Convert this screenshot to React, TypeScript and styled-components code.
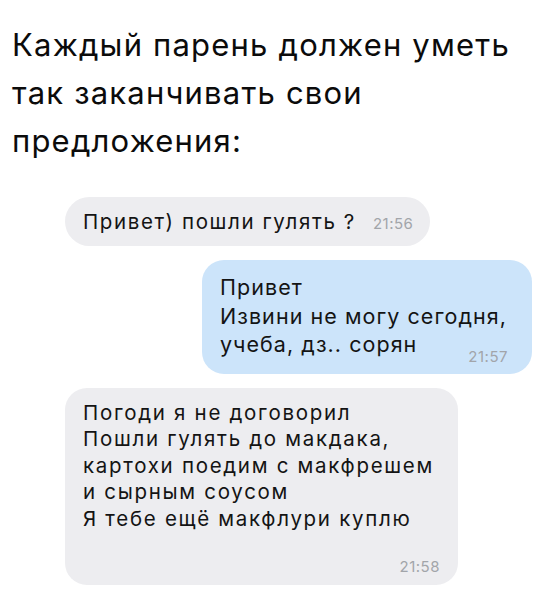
import React from "react";
import styled, { createGlobalStyle } from "styled-components";

const Global = createGlobalStyle`
  html, body {
    margin: 0;
    padding: 0;
    background: #ffffff;
  }
  body {
    font-family: Inter, "Liberation Sans", Arial, sans-serif;
    color: #000;
    -webkit-font-smoothing: antialiased;
  }
`;

const Page = styled.div`
  width: 543px;
  height: 604px;
  box-sizing: border-box;
  padding: 21px 0 0 12px;
  display: flex;
  flex-direction: column;
  overflow: hidden;
`;

const Title = styled.h1`
  margin: 0;
  font-weight: 400;
  font-size: 31px;
  line-height: 48px;
  letter-spacing: 1.2px;
  color: #0b0b0b;
`;

const Chat = styled.div`
  margin-top: 32px;
  padding: 0 11px 0 53px;
  display: flex;
  flex-direction: column;
  gap: 14px;
`;

const Bubble = styled.div<{ $out?: boolean; $width: number }>`
  box-sizing: border-box;
  width: ${(p) => p.$width}px;
  align-self: ${(p) => (p.$out ? "flex-end" : "flex-start")};
  background: ${(p) => (p.$out ? "#cce4fa" : "#ededf0")};
  border-radius: 22px;
  padding: 12px 18px 10px 18px;
  font-size: 20.5px;
  line-height: 26.5px;
  letter-spacing: 1.7px;
  color: #141414;
`;

const OutBubble = styled(Bubble)`
  padding: 13px 18px 15px 18px;
  font-size: 21.5px;
  line-height: 28.5px;
  letter-spacing: 1.05px;
`;

const Pill = styled(Bubble)`
  height: 49px;
  border-radius: 25px;
  padding: 11px 17px 0 18px;
  line-height: 27.5px;
  letter-spacing: 1.6px;
  display: flex;
  align-items: baseline;
  gap: 17px;
  white-space: nowrap;
`;

const Line = styled.div`
  white-space: nowrap;
`;

const LastLine = styled.div`
  display: flex;
  align-items: flex-end;
  justify-content: space-between;
  white-space: nowrap;
`;

const Time = styled.span`
  font-size: 15px;
  line-height: 16px;
  color: #a2a5aa;
  letter-spacing: 0.5px;
`;

const LowTime = styled(Time)`
  margin-bottom: -6px;
  margin-right: 6px;
`;

const TimeRow = styled.div`
  display: flex;
  justify-content: flex-end;
  margin-top: 27px;
`;

export default function App() {
  return (
    <>
      <Global />
      <Page>
        <Title>
          Каждый парень должен уметь
          <br />
          так заканчивать свои
          <br />
          предложения:
        </Title>
        <Chat>
          <Pill $width={365}>
            <span>Привет) пошли гулять ?</span>
            <Time>21:56</Time>
          </Pill>
          <OutBubble $out $width={330}>
            <Line>Привет</Line>
            <Line>Извини не могу сегодня,</Line>
            <LastLine>
              <span>учеба, дз.. сорян</span>
              <LowTime>21:57</LowTime>
            </LastLine>
          </OutBubble>
          <Bubble $width={393}>
            <Line>Погоди я не договорил</Line>
            <Line>Пошли гулять до макдака,</Line>
            <Line>картохи поедим с макфрешем</Line>
            <Line>и сырным соусом</Line>
            <Line>Я тебе ещё макфлури куплю</Line>
            <TimeRow>
              <Time>21:58</Time>
            </TimeRow>
          </Bubble>
        </Chat>
      </Page>
    </>
  );
}
